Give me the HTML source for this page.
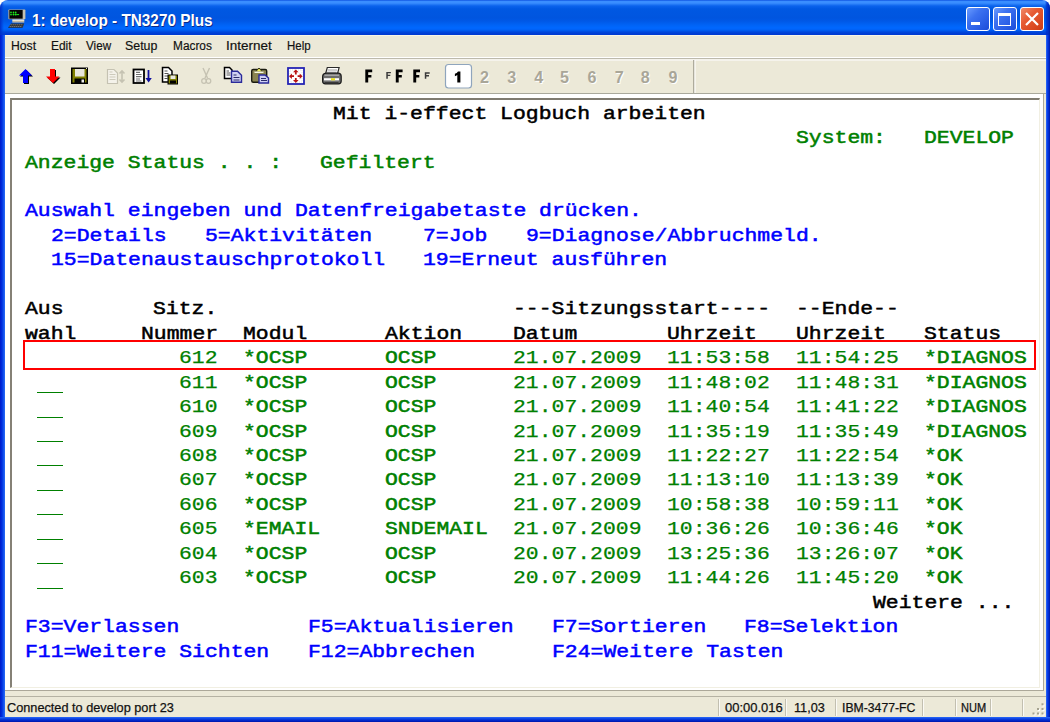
<!DOCTYPE html>
<html><head><meta charset="utf-8">
<style>
*{margin:0;padding:0;box-sizing:border-box}
html{background:#fff}body{width:1050px;height:722px;overflow:hidden;background:#fff}
body{position:relative;font-family:"Liberation Sans",sans-serif}
.abs{position:absolute}
#title{position:absolute;left:0;top:0;width:1050px;height:35px;border-radius:8px 8px 0 0;
 background:linear-gradient(to bottom,#0040d8 0px,#3a8eff 1px,#3a8eff 3px,#0a62ec 6px,#0058e2 9px,#0055df 18px,#0058e6 21px,#0063f5 25px,#0068ff 28px,#0060f4 30px,#0048dc 32px,#003bd2 34px,#003bd2 35px)}
#ttext{position:absolute;left:31px;top:11px;font:bold 15.5px "Liberation Sans",sans-serif;color:#fff;text-shadow:1px 1px 0 #0a1e7a;white-space:nowrap;letter-spacing:0}
#bl{position:absolute;left:0;top:35px;width:5px;height:687px;background:linear-gradient(to right,#0019c8 0,#0030e0 2px,#1a5cf0 4px,#2a6af8 5px)}
#br{position:absolute;left:1046px;top:35px;width:4px;height:687px;background:linear-gradient(to right,#3070f8 0,#0a3ee6 1.5px,#0028c8 3px,#001aa0 4px)}
#bb{position:absolute;left:0;top:717px;width:1050px;height:5px;background:linear-gradient(to bottom,#2a6af8 0,#0a3ee0 2px,#0020c0 4px,#0018a8 5px)}
.menu{position:absolute;top:38px;font-size:12.2px;color:#000;white-space:nowrap}
#sep1{position:absolute;left:5px;top:57px;width:1040px;height:1px;background:#c9c6b6}
#sep2{position:absolute;left:5px;top:58px;width:1040px;height:1px;background:#fff}
#tbbot{position:absolute;left:5px;top:93px;width:1041px;height:1px;background:#a9a99c}
#frame{position:absolute;left:5px;top:94px;width:1039px;height:597px;background:#fff;border-right:1px solid #aca899;border-bottom:1px solid #aca899}
#inner{position:absolute;left:10px;top:98px;width:1030px;height:590px;border-top:2px solid #7f7b70;border-left:2px solid #858176;border-right:1px solid #f1efe2;border-bottom:1px solid #f1efe2}
#sbtop{position:absolute;left:5px;top:696px;width:1041px;height:1px;background:#b5b2a3}
.sb{position:absolute;top:701px;font-size:11.8px;color:#1a1a1a;white-space:nowrap}
.sbsep{position:absolute;top:699px;width:2px;height:17px;border-left:1px solid #c2bfb0;border-right:1px solid #fbfaf5}
.t{position:absolute;font-family:"Liberation Mono",monospace;font-weight:normal;-webkit-text-stroke:0.3px currentColor;font-size:18.5px;letter-spacing:0;white-space:pre;line-height:normal;transform-origin:0 0;transform:scaleX(1.1577)}
.us{position:absolute;width:26px;height:1px;background:#008000}
#redbox{position:absolute;left:23px;top:340px;width:1013px;height:29.5px;border:2px solid #ff0000}
.tdig{position:absolute;top:69px;font:bold 13.5px "Liberation Sans",sans-serif;color:#a9a69a}
.btn{position:absolute;top:7px;width:24px;height:24px;border:1px solid #fff;border-radius:3px}
</style></head><body>
<div class="abs" style="left:0;top:20px;width:1050px;height:702px;background:#ECE9D8"></div>
<div id="title"></div>
<svg class="abs" style="left:4px;top:6px" width="26" height="26" viewBox="0 0 26 26">
 <rect x="4.3" y="3.4" width="17" height="9.8" rx="0.8" fill="#a9a598"/>
 <rect x="5.4" y="4" width="13.4" height="8.6" fill="#050505"/>
 <rect x="18.8" y="3.8" width="2.4" height="9.2" fill="#c4c0b2"/>
 <g fill="#1eea1e"><circle cx="7" cy="6.4" r="0.85"/><circle cx="9.5" cy="6.4" r="0.85"/><circle cx="11.7" cy="6.4" r="0.85"/>
 <circle cx="7" cy="8.6" r="0.85"/><circle cx="9.5" cy="8.6" r="1"/><circle cx="11.7" cy="8.6" r="1"/><rect x="12.5" y="8.1" width="2.6" height="1" /></g>
 <rect x="8.3" y="13.4" width="12" height="1.6" fill="#e8e2d0"/>
 <rect x="8.3" y="15" width="12" height="1.6" fill="#bdb5a0"/>
 <polygon points="4,21.8 7.2,17.6 20.2,17.6 18.6,21.8" fill="#2a2a2a"/>
 <path d="M6.6,18.8 h12.6 M5.6,20.5 h12.6" stroke="#9a9a9a" stroke-width="0.8" stroke-dasharray="1.2,0.8"/>
</svg>
<div style="position:absolute;left:31.70px;top:10.76px;font:bold 16.279px 'Liberation Sans',sans-serif;line-height:normal;white-space:pre;color:#fff;transform-origin:0 0;transform:scaleX(0.9421);text-shadow:1px 1px 0 #0a2a8a;">1: develop - TN3270 Plus</div>
<!-- title buttons -->
<div class="btn" style="left:966px;background:linear-gradient(135deg,#6a9cff 0%,#3d72f0 35%,#2a5ee6 70%,#1b4cd8 100%)"></div>
<div class="abs" style="left:971px;top:22px;width:9px;height:3px;background:#fff"></div>
<div class="btn" style="left:993px;background:linear-gradient(135deg,#6a9cff 0%,#3d72f0 35%,#2a5ee6 70%,#1b4cd8 100%)"></div>
<div class="abs" style="left:998px;top:13px;width:13px;height:13px;border:1.5px solid #fff;border-top-width:3px"></div>
<div class="btn" style="left:1020px;background:linear-gradient(135deg,#f08a6a 0%,#e65a32 40%,#d8461e 80%,#c83c18 100%)"></div>
<svg class="abs" style="left:1020px;top:7px" width="24" height="24" viewBox="0 0 24 24"><path d="M6 6 L18 18 M18 6 L6 18" stroke="#fff" stroke-width="2.2"/></svg>
<!-- corners -->
<div class="abs" style="left:1040px;top:0;width:10px;height:35px;border-radius:0 8px 0 0;background:linear-gradient(to right,rgba(0,40,200,0) 5px,rgba(0,40,200,.6) 6.5px,#0030c8 8px,#0020a8 10px)"></div>
<div class="abs" style="left:0;top:0;width:8px;height:35px;border-radius:8px 0 0 0;background:linear-gradient(to right,#0030c8 0,rgba(0,60,220,.3) 3px,rgba(0,60,220,0) 4px)"></div>

<div id="bl"></div><div id="br"></div><div id="bb"></div>
<!-- menu -->
<div class="abs" style="left:5px;top:35px;width:1040px;height:1px;background:#f8f5e6"></div>
<div style="position:absolute;left:11.10px;top:37.63px;font:normal 13.663px 'Liberation Sans',sans-serif;line-height:normal;white-space:pre;color:#111;transform-origin:0 0;transform:scaleX(0.8935);-webkit-text-stroke:0.2px #111;">Host</div>
<div style="position:absolute;left:50.70px;top:37.63px;font:normal 13.663px 'Liberation Sans',sans-serif;line-height:normal;white-space:pre;color:#111;transform-origin:0 0;transform:scaleX(0.8751);-webkit-text-stroke:0.2px #111;">Edit</div>
<div style="position:absolute;left:85.80px;top:37.63px;font:normal 13.663px 'Liberation Sans',sans-serif;line-height:normal;white-space:pre;color:#111;transform-origin:0 0;transform:scaleX(0.8537);-webkit-text-stroke:0.2px #111;">View</div>
<div style="position:absolute;left:125.40px;top:37.63px;font:normal 13.663px 'Liberation Sans',sans-serif;line-height:normal;white-space:pre;color:#111;transform-origin:0 0;transform:scaleX(0.9075);-webkit-text-stroke:0.2px #111;">Setup</div>
<div style="position:absolute;left:172.60px;top:37.63px;font:normal 13.663px 'Liberation Sans',sans-serif;line-height:normal;white-space:pre;color:#111;transform-origin:0 0;transform:scaleX(0.8685);-webkit-text-stroke:0.2px #111;">Macros</div>
<div style="position:absolute;left:226.00px;top:37.63px;font:normal 13.663px 'Liberation Sans',sans-serif;line-height:normal;white-space:pre;color:#111;transform-origin:0 0;transform:scaleX(0.9864);-webkit-text-stroke:0.2px #111;">Internet</div>
<div style="position:absolute;left:286.90px;top:37.63px;font:normal 13.663px 'Liberation Sans',sans-serif;line-height:normal;white-space:pre;color:#111;transform-origin:0 0;transform:scaleX(0.8397);-webkit-text-stroke:0.2px #111;">Help</div>
<!-- toolbar -->
<svg class="abs" style="left:0;top:0" width="1050" height="95" viewBox="0 0 1050 95">
 <!-- rebar lines -->
 <rect x="5" y="57" width="1041" height="1" fill="#ffffff"/>
 <rect x="5" y="58" width="1041" height="1" fill="#bdbaac"/>
 <rect x="5" y="59" width="1041" height="2" fill="#f5f3ec"/>
 <rect x="693" y="60" width="1.5" height="33" fill="#aeab9c"/>
 <rect x="694.5" y="60" width="1" height="33" fill="#ffffff"/>
 <!-- up arrow blue -->
 <polygon points="26.5,70 33,76.5 29,76.5 29,84 24,84 24,76.5 20,76.5" fill="#000"/>
 <polygon points="25.5,69 32,75.5 28,75.5 28,83 23,83 23,75.5 19,75.5" fill="#0000ff"/>
 <!-- down arrow red -->
 <polygon points="51,70 56,70 56,77.5 60.5,77.5 54,84 47,77.5 51,77.5" fill="#000"/>
 <polygon points="50,69 55,69 55,76.5 59.5,76.5 53,83 46,76.5 50,76.5" fill="#ff0000"/>
 <!-- floppy -->
 <rect x="71" y="67.5" width="17" height="16.5" fill="#000"/>
 <rect x="72.5" y="69" width="14" height="13.5" fill="#808000"/>
 <rect x="75" y="69" width="9.5" height="7.5" fill="#e8e6dc"/>
 <rect x="74.5" y="78.5" width="10.5" height="5" fill="#000"/>
 <rect x="81.5" y="79.5" width="2.5" height="3" fill="#f0f0f0"/>
 <rect x="86" y="68" width="1" height="1" fill="#ddd"/>
 <!-- disabled doc + updown -->
 <path d="M107.5,69.5 h6.5 l3.5,3.5 v10.5 h-10 z" fill="#f4f2ea" stroke="#c5c2b2" stroke-width="1.2"/>
 <path d="M109.5,74.5 h6 M109.5,77 h6 M109.5,79.5 h6 M109.5,72 h3" stroke="#cdcabb" stroke-width="1"/>
 <path d="M122,71 v11 M119.5,73.5 l2.5,-2.5 l2.5,2.5 M119.5,79.5 l2.5,2.5 l2.5,-2.5" stroke="#c5c2b2" stroke-width="1.6" fill="none"/>
 <!-- doc black + blue down arrow -->
 <rect x="133.5" y="69.5" width="10.5" height="13.5" fill="#fff" stroke="#000" stroke-width="1.8"/>
 <path d="M136,72.3 h4 M136,74.5 h5.5 M136,76.7 h5.5 M136,79 h4 M136,81 h5.5" stroke="#707070" stroke-width="1.2"/>
 <path d="M148.5,70 v9" stroke="#1010a0" stroke-width="1.8"/>
 <polygon points="145.5,78 151.8,78 148.6,82.5" fill="#1010a0"/>
 <!-- copy doc + floppy -->
 <path d="M162.5,67.5 h6 l3.5,3.5 v11 h-9.5 z" fill="#fff" stroke="#000" stroke-width="1.5"/>
 <path d="M164.5,71 h3 M164.5,73.5 h4 M164.5,76 h4 M164.5,78.5 h3" stroke="#555" stroke-width="1"/>
 <rect x="167.5" y="74.5" width="10.5" height="10" fill="#000"/>
 <rect x="168.7" y="75.5" width="8.3" height="8" fill="#808000"/>
 <rect x="170.5" y="75.5" width="5" height="3.5" fill="#e8e8e0"/>
 <rect x="170" y="80.5" width="6" height="3" fill="#000"/>
 <!-- scissors disabled -->
 <path d="M203,68 L207.5,78 M209.5,68 L205,78" stroke="#c5c2b2" stroke-width="1.4" fill="none"/>
 <circle cx="204" cy="81" r="2.3" fill="none" stroke="#c5c2b2" stroke-width="1.2"/>
 <circle cx="208.5" cy="81" r="2.3" fill="none" stroke="#c5c2b2" stroke-width="1.2"/>
 <!-- copy -->
 <path d="M224.5,67.5 h5 l2.5,2.5 v8.5 h-7.5 z" fill="#fff" stroke="#000" stroke-width="1.5"/>
 <path d="M226.5,71 h2.5 M226.5,73 h4 M226.5,75 h4" stroke="#555" stroke-width="1"/>
 <path d="M231.5,71.3 h6 l4,4 v7 h-10 z" fill="#cfd0f2" stroke="#2a2a9a" stroke-width="1.4"/>
 <path d="M233.5,75 h3 M233.5,77.5 h6 M233.5,80 h6" stroke="#2a2a6a" stroke-width="1.1"/>
 <!-- paste -->
 <rect x="251.7" y="69.5" width="15" height="12.8" rx="1.5" fill="#8a8450" stroke="#1a1a10" stroke-width="1.4"/>
 <path d="M255.5,72 L259,68 L262.5,72 Z" fill="#f0f060" stroke="#303010" stroke-width="1"/>
 <rect x="254.5" y="71.5" width="9" height="1.5" fill="#f8f8e0"/>
 <path d="M259,75 h6 l3.5,3 v5 h-9.5 z" fill="#cfd0f2" stroke="#2a2a9a" stroke-width="1.4"/>
 <path d="M261,78.5 h5 M261,80.5 h6" stroke="#2a2a6a" stroke-width="1.1"/>
 <!-- fullscreen -->
 <rect x="288" y="68" width="16" height="16" fill="#fff" stroke="#2424b4" stroke-width="1.8"/>
 <path d="M290,70 h12 v12 h-12 z" fill="none" stroke="#dcdcdc" stroke-width="0.8" stroke-dasharray="1,1"/>
 <polygon points="295.8,69.4 298.6,72.3 296.7,72.3 296.7,74.4 294.9,74.4 294.9,72.3 293,72.3" fill="#b81414"/>
 <polygon points="295.8,83 298.6,80.1 296.7,80.1 296.7,78 294.9,78 294.9,80.1 293,80.1" fill="#b81414"/>
 <polygon points="289,76.2 291.9,73.4 291.9,75.3 294,75.3 294,77.1 291.9,77.1 291.9,79" fill="#b81414"/>
 <polygon points="302.6,76.2 299.7,73.4 299.7,75.3 297.6,75.3 297.6,77.1 299.7,77.1 299.7,79" fill="#b81414"/>
 <!-- printer -->
 <path d="M325.5,74 l1.8,-6.5 h11.8 l-1.6,6.5 z" fill="#fff" stroke="#2a2a2a" stroke-width="1.2"/>
 <path d="M327.5,70 h9.5 M327,72.2 h9.5" stroke="#9a9a9a" stroke-width="1"/>
 <path d="M322.6,77 q0,-3.5 3.5,-3.8 h12.5 q2.6,0.3 2.6,3.3 v4.6 q0,2.8 -2.8,2.8 h-13 q-2.8,0 -2.8,-2.8 z" fill="#6e6e6e" stroke="#1a1a1a" stroke-width="1.2"/>
 <path d="M324.5,75.3 h14.5" stroke="#a8a8a8" stroke-width="1.3"/>
 <rect x="324" y="78.2" width="15" height="2.2" fill="#ffffff"/>
 <rect x="331" y="78.2" width="4" height="2.2" fill="#e8e020"/>
 <path d="M324.5,82.5 h14" stroke="#3a3a3a" stroke-width="1"/>
 <!-- F icons -->
 <path d="M365.3,82.6 V69.6 H372.2 V72.3 H368.2 V75 H371.4 V77.6 H368.2 V82.6 Z" fill="#000"/>
 <path d="M386.3,78.8 V71.9 H390.9 V73.3 H387.8 V74.8 H390.3 V76.1 H387.8 V78.8 Z" fill="#3a3a3a"/>
 <path d="M395.8,82.6 V69.6 H402.6 V72.3 H398.7 V75 H401.8 V77.6 H398.7 V82.6 Z" fill="#000"/>
 <path d="M413.3,82.6 V69.6 H420 V72.3 H416.2 V75 H419.3 V77.6 H416.2 V82.6 Z" fill="#000"/>
 <path d="M424.8,78.8 V72.3 H429.7 V73.7 H426.3 V75.1 H429 V76.4 H426.3 V78.8 Z" fill="#3a3a3a"/>
 <!-- session box -->
 <rect x="445.5" y="64.5" width="26" height="23.5" rx="3" fill="#fff" stroke="#8fa5bd" stroke-width="1.2"/>
 <path d="M457.3,82.5 V75 Q456,76 454.9,76.3 V73.8 Q457,73 458,71.4 H460.4 V82.5 Z" fill="#000"/>
</svg>
<div style="position:absolute;left:480.01px;top:67.89px;font:bold 16.13px 'Liberation Sans',sans-serif;line-height:normal;color:#a9a698;text-shadow:1px 1px 0 #fff;">2</div>
<div style="position:absolute;left:507.26px;top:67.89px;font:bold 16.13px 'Liberation Sans',sans-serif;line-height:normal;color:#a9a698;text-shadow:1px 1px 0 #fff;">3</div>
<div style="position:absolute;left:534.31px;top:67.89px;font:bold 16.13px 'Liberation Sans',sans-serif;line-height:normal;color:#a9a698;text-shadow:1px 1px 0 #fff;">4</div>
<div style="position:absolute;left:559.91px;top:67.89px;font:bold 16.13px 'Liberation Sans',sans-serif;line-height:normal;color:#a9a698;text-shadow:1px 1px 0 #fff;">5</div>
<div style="position:absolute;left:587.51px;top:67.89px;font:bold 16.13px 'Liberation Sans',sans-serif;line-height:normal;color:#a9a698;text-shadow:1px 1px 0 #fff;">6</div>
<div style="position:absolute;left:614.66px;top:67.89px;font:bold 16.13px 'Liberation Sans',sans-serif;line-height:normal;color:#a9a698;text-shadow:1px 1px 0 #fff;">7</div>
<div style="position:absolute;left:640.76px;top:67.89px;font:bold 16.13px 'Liberation Sans',sans-serif;line-height:normal;color:#a9a698;text-shadow:1px 1px 0 #fff;">8</div>
<div style="position:absolute;left:668.41px;top:67.89px;font:bold 16.13px 'Liberation Sans',sans-serif;line-height:normal;color:#a9a698;text-shadow:1px 1px 0 #fff;">9</div>

<div id="tbbot"></div>
<div id="frame"></div>
<div id="inner"></div>
<span class="t" style="left:333.25px;top:103.60px;color:#000000;-webkit-text-stroke-width:0.50px">Mit i-effect Logbuch arbeiten</span>
<span class="t" style="left:795.85px;top:128.06px;color:#008000;-webkit-text-stroke-width:0.50px">System:</span>
<span class="t" style="left:924.35px;top:128.06px;color:#008000;-webkit-text-stroke-width:0.50px">DEVELOP</span>
<span class="t" style="left:24.85px;top:152.51px;color:#008000;-webkit-text-stroke-width:0.50px">Anzeige Status . . :</span>
<span class="t" style="left:320.40px;top:152.51px;color:#008000;-webkit-text-stroke-width:0.50px">Gefiltert</span>
<span class="t" style="left:24.85px;top:201.43px;color:#0000ff;-webkit-text-stroke-width:0.50px">Auswahl eingeben und Datenfreigabetaste drücken.</span>
<span class="t" style="left:50.55px;top:225.89px;color:#0000ff;-webkit-text-stroke-width:0.50px">2=Details</span>
<span class="t" style="left:204.75px;top:225.89px;color:#0000ff;-webkit-text-stroke-width:0.50px">5=Aktivitäten</span>
<span class="t" style="left:423.20px;top:225.89px;color:#0000ff;-webkit-text-stroke-width:0.50px">7=Job</span>
<span class="t" style="left:526.00px;top:225.89px;color:#0000ff;-webkit-text-stroke-width:0.50px">9=Diagnose/Abbruchmeld.</span>
<span class="t" style="left:50.55px;top:250.35px;color:#0000ff;-webkit-text-stroke-width:0.50px">15=Datenaustauschprotokoll</span>
<span class="t" style="left:423.20px;top:250.35px;color:#0000ff;-webkit-text-stroke-width:0.50px">19=Erneut ausführen</span>
<span class="t" style="left:24.85px;top:299.26px;color:#000000;-webkit-text-stroke-width:0.50px">Aus</span>
<span class="t" style="left:153.35px;top:299.26px;color:#000000;-webkit-text-stroke-width:0.50px">Sitz.</span>
<span class="t" style="left:513.15px;top:299.26px;color:#000000;-webkit-text-stroke-width:0.50px">---Sitzungsstart----</span>
<span class="t" style="left:795.85px;top:299.26px;color:#000000;-webkit-text-stroke-width:0.50px">--Ende--</span>
<span class="t" style="left:24.85px;top:323.72px;color:#000000;-webkit-text-stroke-width:0.50px">wahl</span>
<span class="t" style="left:140.50px;top:323.72px;color:#000000;-webkit-text-stroke-width:0.50px">Nummer</span>
<span class="t" style="left:243.30px;top:323.72px;color:#000000;-webkit-text-stroke-width:0.50px">Modul</span>
<span class="t" style="left:384.65px;top:323.72px;color:#000000;-webkit-text-stroke-width:0.50px">Aktion</span>
<span class="t" style="left:513.15px;top:323.72px;color:#000000;-webkit-text-stroke-width:0.50px">Datum</span>
<span class="t" style="left:667.35px;top:323.72px;color:#000000;-webkit-text-stroke-width:0.50px">Uhrzeit</span>
<span class="t" style="left:795.85px;top:323.72px;color:#000000;-webkit-text-stroke-width:0.50px">Uhrzeit</span>
<span class="t" style="left:924.35px;top:323.72px;color:#000000;-webkit-text-stroke-width:0.50px">Status</span>
<span class="t" style="left:179.05px;top:348.18px;color:#008000;-webkit-text-stroke-width:0.25px">612</span>
<span class="t" style="left:243.30px;top:348.18px;color:#008000;-webkit-text-stroke-width:0.50px">*OCSP</span>
<span class="t" style="left:384.65px;top:348.18px;color:#008000;-webkit-text-stroke-width:0.50px">OCSP</span>
<span class="t" style="left:513.15px;top:348.18px;color:#008000;-webkit-text-stroke-width:0.25px">21.07.2009</span>
<span class="t" style="left:667.35px;top:348.18px;color:#008000;-webkit-text-stroke-width:0.25px">11:53:58</span>
<span class="t" style="left:795.85px;top:348.18px;color:#008000;-webkit-text-stroke-width:0.25px">11:54:25</span>
<span class="t" style="left:924.35px;top:348.18px;color:#008000;-webkit-text-stroke-width:0.50px">*DIAGNOS</span>
<span class="t" style="left:179.05px;top:372.64px;color:#008000;-webkit-text-stroke-width:0.25px">611</span>
<span class="t" style="left:243.30px;top:372.64px;color:#008000;-webkit-text-stroke-width:0.50px">*OCSP</span>
<span class="t" style="left:384.65px;top:372.64px;color:#008000;-webkit-text-stroke-width:0.50px">OCSP</span>
<span class="t" style="left:513.15px;top:372.64px;color:#008000;-webkit-text-stroke-width:0.25px">21.07.2009</span>
<span class="t" style="left:667.35px;top:372.64px;color:#008000;-webkit-text-stroke-width:0.25px">11:48:02</span>
<span class="t" style="left:795.85px;top:372.64px;color:#008000;-webkit-text-stroke-width:0.25px">11:48:31</span>
<span class="t" style="left:924.35px;top:372.64px;color:#008000;-webkit-text-stroke-width:0.50px">*DIAGNOS</span>
<span class="t" style="left:179.05px;top:397.09px;color:#008000;-webkit-text-stroke-width:0.25px">610</span>
<span class="t" style="left:243.30px;top:397.09px;color:#008000;-webkit-text-stroke-width:0.50px">*OCSP</span>
<span class="t" style="left:384.65px;top:397.09px;color:#008000;-webkit-text-stroke-width:0.50px">OCSP</span>
<span class="t" style="left:513.15px;top:397.09px;color:#008000;-webkit-text-stroke-width:0.25px">21.07.2009</span>
<span class="t" style="left:667.35px;top:397.09px;color:#008000;-webkit-text-stroke-width:0.25px">11:40:54</span>
<span class="t" style="left:795.85px;top:397.09px;color:#008000;-webkit-text-stroke-width:0.25px">11:41:22</span>
<span class="t" style="left:924.35px;top:397.09px;color:#008000;-webkit-text-stroke-width:0.50px">*DIAGNOS</span>
<span class="t" style="left:179.05px;top:421.55px;color:#008000;-webkit-text-stroke-width:0.25px">609</span>
<span class="t" style="left:243.30px;top:421.55px;color:#008000;-webkit-text-stroke-width:0.50px">*OCSP</span>
<span class="t" style="left:384.65px;top:421.55px;color:#008000;-webkit-text-stroke-width:0.50px">OCSP</span>
<span class="t" style="left:513.15px;top:421.55px;color:#008000;-webkit-text-stroke-width:0.25px">21.07.2009</span>
<span class="t" style="left:667.35px;top:421.55px;color:#008000;-webkit-text-stroke-width:0.25px">11:35:19</span>
<span class="t" style="left:795.85px;top:421.55px;color:#008000;-webkit-text-stroke-width:0.25px">11:35:49</span>
<span class="t" style="left:924.35px;top:421.55px;color:#008000;-webkit-text-stroke-width:0.50px">*DIAGNOS</span>
<span class="t" style="left:179.05px;top:446.01px;color:#008000;-webkit-text-stroke-width:0.25px">608</span>
<span class="t" style="left:243.30px;top:446.01px;color:#008000;-webkit-text-stroke-width:0.50px">*OCSP</span>
<span class="t" style="left:384.65px;top:446.01px;color:#008000;-webkit-text-stroke-width:0.50px">OCSP</span>
<span class="t" style="left:513.15px;top:446.01px;color:#008000;-webkit-text-stroke-width:0.25px">21.07.2009</span>
<span class="t" style="left:667.35px;top:446.01px;color:#008000;-webkit-text-stroke-width:0.25px">11:22:27</span>
<span class="t" style="left:795.85px;top:446.01px;color:#008000;-webkit-text-stroke-width:0.25px">11:22:54</span>
<span class="t" style="left:924.35px;top:446.01px;color:#008000;-webkit-text-stroke-width:0.50px">*OK</span>
<span class="t" style="left:179.05px;top:470.47px;color:#008000;-webkit-text-stroke-width:0.25px">607</span>
<span class="t" style="left:243.30px;top:470.47px;color:#008000;-webkit-text-stroke-width:0.50px">*OCSP</span>
<span class="t" style="left:384.65px;top:470.47px;color:#008000;-webkit-text-stroke-width:0.50px">OCSP</span>
<span class="t" style="left:513.15px;top:470.47px;color:#008000;-webkit-text-stroke-width:0.25px">21.07.2009</span>
<span class="t" style="left:667.35px;top:470.47px;color:#008000;-webkit-text-stroke-width:0.25px">11:13:10</span>
<span class="t" style="left:795.85px;top:470.47px;color:#008000;-webkit-text-stroke-width:0.25px">11:13:39</span>
<span class="t" style="left:924.35px;top:470.47px;color:#008000;-webkit-text-stroke-width:0.50px">*OK</span>
<span class="t" style="left:179.05px;top:494.93px;color:#008000;-webkit-text-stroke-width:0.25px">606</span>
<span class="t" style="left:243.30px;top:494.93px;color:#008000;-webkit-text-stroke-width:0.50px">*OCSP</span>
<span class="t" style="left:384.65px;top:494.93px;color:#008000;-webkit-text-stroke-width:0.50px">OCSP</span>
<span class="t" style="left:513.15px;top:494.93px;color:#008000;-webkit-text-stroke-width:0.25px">21.07.2009</span>
<span class="t" style="left:667.35px;top:494.93px;color:#008000;-webkit-text-stroke-width:0.25px">10:58:38</span>
<span class="t" style="left:795.85px;top:494.93px;color:#008000;-webkit-text-stroke-width:0.25px">10:59:11</span>
<span class="t" style="left:924.35px;top:494.93px;color:#008000;-webkit-text-stroke-width:0.50px">*OK</span>
<span class="t" style="left:179.05px;top:519.38px;color:#008000;-webkit-text-stroke-width:0.25px">605</span>
<span class="t" style="left:243.30px;top:519.38px;color:#008000;-webkit-text-stroke-width:0.50px">*EMAIL</span>
<span class="t" style="left:384.65px;top:519.38px;color:#008000;-webkit-text-stroke-width:0.50px">SNDEMAIL</span>
<span class="t" style="left:513.15px;top:519.38px;color:#008000;-webkit-text-stroke-width:0.25px">21.07.2009</span>
<span class="t" style="left:667.35px;top:519.38px;color:#008000;-webkit-text-stroke-width:0.25px">10:36:26</span>
<span class="t" style="left:795.85px;top:519.38px;color:#008000;-webkit-text-stroke-width:0.25px">10:36:46</span>
<span class="t" style="left:924.35px;top:519.38px;color:#008000;-webkit-text-stroke-width:0.50px">*OK</span>
<span class="t" style="left:179.05px;top:543.84px;color:#008000;-webkit-text-stroke-width:0.25px">604</span>
<span class="t" style="left:243.30px;top:543.84px;color:#008000;-webkit-text-stroke-width:0.50px">*OCSP</span>
<span class="t" style="left:384.65px;top:543.84px;color:#008000;-webkit-text-stroke-width:0.50px">OCSP</span>
<span class="t" style="left:513.15px;top:543.84px;color:#008000;-webkit-text-stroke-width:0.25px">20.07.2009</span>
<span class="t" style="left:667.35px;top:543.84px;color:#008000;-webkit-text-stroke-width:0.25px">13:25:36</span>
<span class="t" style="left:795.85px;top:543.84px;color:#008000;-webkit-text-stroke-width:0.25px">13:26:07</span>
<span class="t" style="left:924.35px;top:543.84px;color:#008000;-webkit-text-stroke-width:0.50px">*OK</span>
<span class="t" style="left:179.05px;top:568.30px;color:#008000;-webkit-text-stroke-width:0.25px">603</span>
<span class="t" style="left:243.30px;top:568.30px;color:#008000;-webkit-text-stroke-width:0.50px">*OCSP</span>
<span class="t" style="left:384.65px;top:568.30px;color:#008000;-webkit-text-stroke-width:0.50px">OCSP</span>
<span class="t" style="left:513.15px;top:568.30px;color:#008000;-webkit-text-stroke-width:0.25px">20.07.2009</span>
<span class="t" style="left:667.35px;top:568.30px;color:#008000;-webkit-text-stroke-width:0.25px">11:44:26</span>
<span class="t" style="left:795.85px;top:568.30px;color:#008000;-webkit-text-stroke-width:0.25px">11:45:20</span>
<span class="t" style="left:924.35px;top:568.30px;color:#008000;-webkit-text-stroke-width:0.50px">*OK</span>
<span class="t" style="left:872.95px;top:592.76px;color:#000000;-webkit-text-stroke-width:0.50px">Weitere ...</span>
<span class="t" style="left:24.85px;top:617.22px;color:#0000ff;-webkit-text-stroke-width:0.50px">F3=Verlassen</span>
<span class="t" style="left:307.55px;top:617.22px;color:#0000ff;-webkit-text-stroke-width:0.50px">F5=Aktualisieren</span>
<span class="t" style="left:551.70px;top:617.22px;color:#0000ff;-webkit-text-stroke-width:0.50px">F7=Sortieren</span>
<span class="t" style="left:744.45px;top:617.22px;color:#0000ff;-webkit-text-stroke-width:0.50px">F8=Selektion</span>
<span class="t" style="left:24.85px;top:641.67px;color:#0000ff;-webkit-text-stroke-width:0.50px">F11=Weitere Sichten</span>
<span class="t" style="left:307.55px;top:641.67px;color:#0000ff;-webkit-text-stroke-width:0.50px">F12=Abbrechen</span>
<span class="t" style="left:551.70px;top:641.67px;color:#0000ff;-webkit-text-stroke-width:0.50px">F24=Weitere Tasten</span>
<div class="us" style="left:37px;top:392px"></div>
<div class="us" style="left:37px;top:417px"></div>
<div class="us" style="left:37px;top:441px"></div>
<div class="us" style="left:37px;top:465px"></div>
<div class="us" style="left:37px;top:490px"></div>
<div class="us" style="left:37px;top:514px"></div>
<div class="us" style="left:37px;top:539px"></div>
<div class="us" style="left:37px;top:563px"></div>
<div class="us" style="left:37px;top:588px"></div>
<div id="redbox"></div>
<!-- status bar -->
<div id="sbtop"></div>
<div style="position:absolute;left:6.90px;top:700.29px;font:normal 13.372px 'Liberation Sans',sans-serif;line-height:normal;white-space:pre;color:#111;transform-origin:0 0;transform:scaleX(0.9518);-webkit-text-stroke:0.25px #111;">Connected to develop port 23</div>
<div style="position:absolute;left:724.70px;top:700.29px;font:normal 13.372px 'Liberation Sans',sans-serif;line-height:normal;white-space:pre;color:#111;transform-origin:0 0;transform:scaleX(0.9699);-webkit-text-stroke:0.25px #111;">00:00.016</div>
<div style="position:absolute;left:793.90px;top:700.29px;font:normal 13.372px 'Liberation Sans',sans-serif;line-height:normal;white-space:pre;color:#111;transform-origin:0 0;transform:scaleX(0.9486);-webkit-text-stroke:0.25px #111;">11,03</div>
<div style="position:absolute;left:841.50px;top:700.29px;font:normal 13.372px 'Liberation Sans',sans-serif;line-height:normal;white-space:pre;color:#111;transform-origin:0 0;transform:scaleX(0.9145);-webkit-text-stroke:0.25px #111;">IBM-3477-FC</div>
<div style="position:absolute;left:961.00px;top:700.29px;font:normal 13.372px 'Liberation Sans',sans-serif;line-height:normal;white-space:pre;color:#111;transform-origin:0 0;transform:scaleX(0.8276);-webkit-text-stroke:0.25px #111;">NUM</div>
<div class="sbsep" style="left:718px"></div>
<div class="sbsep" style="left:785px"></div>
<div class="sbsep" style="left:835px"></div>
<div class="sbsep" style="left:922px"></div>
<div class="sbsep" style="left:955px"></div>
<div class="sbsep" style="left:990px"></div>
<div class="sbsep" style="left:1022px"></div>
<svg class="abs" style="left:1028px;top:700px" width="18" height="17" viewBox="1028 700 18 17">
 <g fill="#ffffff"><rect x="1042.5" y="704.5" width="2" height="2"/><rect x="1038" y="709" width="2" height="2"/><rect x="1042.5" y="709" width="2" height="2"/><rect x="1033.5" y="713.5" width="2" height="2"/><rect x="1038" y="713.5" width="2" height="2"/><rect x="1042.5" y="713.5" width="2" height="2"/></g>
 <g fill="#a6a390"><rect x="1041.5" y="703.3" width="2" height="2"/><rect x="1037" y="708" width="2" height="2"/><rect x="1041.5" y="708" width="2" height="2"/><rect x="1032.5" y="712.5" width="2" height="2"/><rect x="1037" y="712.5" width="2" height="2"/><rect x="1041.5" y="712.5" width="2" height="2"/></g>
</svg>
</body></html>
